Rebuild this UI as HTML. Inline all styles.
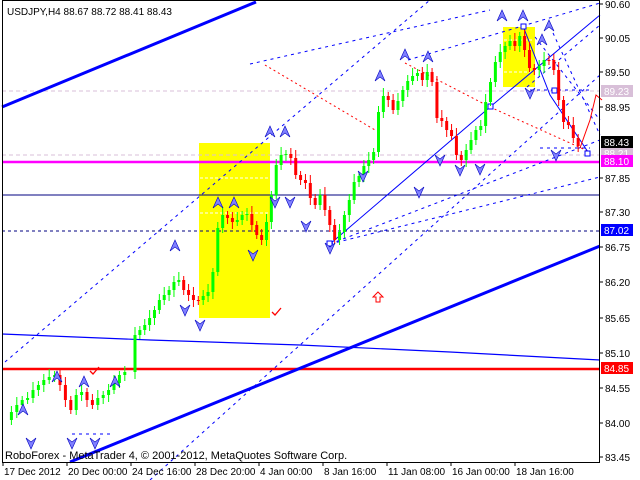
<!DOCTYPE html>
<html><head><meta charset="utf-8"><style>
html,body{margin:0;padding:0;background:#fff;}
body{width:640px;height:480px;overflow:hidden;font-family:"Liberation Sans",sans-serif;}
svg{display:block}
text{font-family:"Liberation Sans",sans-serif;font-size:10px;}
</style></head><body>
<svg id="s" width="640" height="480" viewBox="0 0 640 480" xmlns="http://www.w3.org/2000/svg">
<rect width="640" height="480" fill="#fff"/>
<rect x="199" y="143" width="71" height="175" fill="#ffff00"/>
<rect x="503" y="27" width="32" height="60" fill="#ffff00"/>
<g stroke="#fff" stroke-dasharray="3,2" stroke-width="1">
<line x1="200" y1="178" x2="270" y2="178"/><line x1="200" y1="213" x2="270" y2="213"/>
<line x1="504" y1="40" x2="534" y2="40"/><line x1="504" y1="72" x2="534" y2="72"/>
</g>
<line x1="2" y1="91" x2="600" y2="91" stroke="#d8bfd8" stroke-dasharray="4,3"/>
<line x1="2" y1="155" x2="600" y2="155" stroke="#d8bfd8" stroke-dasharray="4,3"/>
<line x1="2" y1="162" x2="600" y2="162" stroke="#ff00ff" stroke-width="2.5"/>
<line x1="2" y1="195" x2="600" y2="195" stroke="#000080" stroke-width="1"/>
<line x1="2" y1="231" x2="600" y2="231" stroke="#000080" stroke-dasharray="3,3"/>
<line x1="2" y1="369" x2="600" y2="369" stroke="#ff0000" stroke-width="2.5"/>
<line x1="2" y1="107" x2="256" y2="2" stroke="#0000ff" stroke-width="3"/>
<line x1="70" y1="462" x2="600" y2="246" stroke="#0000ff" stroke-width="3"/>
<polyline points="2,334 150,340 300,345 450,352 600,360" fill="none" stroke="#0000ff" stroke-width="1.2"/>
<g stroke="#0000ff" stroke-width="1" stroke-dasharray="3,4" fill="none">
<line x1="5" y1="362" x2="430" y2="0"/>
<line x1="150" y1="480" x2="600" y2="75"/>
<line x1="330" y1="244" x2="600" y2="140"/>
<line x1="330" y1="244" x2="600" y2="177"/>
<line x1="408" y1="60" x2="600" y2="3"/>
<line x1="250" y1="64" x2="490" y2="10"/>
<line x1="553" y1="33" x2="600" y2="135"/>
<line x1="535" y1="37" x2="600" y2="120"/>
<line x1="527" y1="87" x2="600" y2="25"/>
<line x1="540" y1="148" x2="590" y2="148"/>
<line x1="530" y1="90" x2="590" y2="90"/>
<line x1="72" y1="434" x2="110" y2="434"/>
</g>
<g stroke="#ff0000" stroke-width="1" stroke-dasharray="2,3" fill="none">
<line x1="405" y1="63" x2="490" y2="107"/>
<line x1="490" y1="107" x2="590" y2="152"/>
<line x1="265" y1="65" x2="375" y2="130"/>
</g>
<polyline points="330,244 490,107 600,15" fill="none" stroke="#0000ff" stroke-width="1"/>
<polyline points="523,26 550,95 590,155" fill="none" stroke="#0000ff" stroke-width="1"/>
<polyline points="580,148 590,120 596,95 602,100" fill="none" stroke="#ff0000" stroke-width="1"/>
<g fill="#fff" stroke="#0000ff">
<rect x="327" y="241" width="5" height="5"/><rect x="488" y="104" width="5" height="5"/>
<rect x="521" y="24" width="5" height="5"/><rect x="552" y="88" width="5" height="5"/><rect x="585" y="151" width="5" height="5"/>
</g>
<g id="candles"></g>
<g id="fr" fill="#8080ff" stroke="#0000c0" stroke-width="0.6"></g>
<path d="M272,312 l3,3 l6,-7" stroke="#ff0000" fill="none" stroke-width="1.3"/>
<path d="M90,371 l3,3 l6,-7" stroke="#ff0000" fill="none" stroke-width="1.3"/>
<path d="M378,292 l5,5 h-3 v5 h-4 v-5 h-3 z" fill="#fff" stroke="#ff0000"/>
<rect x="2.5" y="0.5" width="597" height="462" fill="none" stroke="#000"/>
<text x="7" y="15">USDJPY,H4  88.67 88.72 88.41 88.43</text>
<text x="5" y="459" style="font-size:11px">RoboForex - MetaTrader 4, © 2001-2012, MetaQuotes Software Corp.</text>
<g id="axis"></g>
</svg>
<script>
var NS="http://www.w3.org/2000/svg";
function el(p,t,a,txt){var e=document.createElementNS(NS,t);for(var k in a)e.setAttribute(k,a[k]);if(txt)e.textContent=txt;p.appendChild(e);return e;}
var ys=[420,412,405,400,398,390,385,380,377,375,385,400,410,395,392,400,405,398,395,390,383,375,372,
335,330,325,318,310,300,295,290,282,280,290,295,300,300,296,292,272,228,215,218,222,220,215,214,225,235,240,222,195,165,155,154,158,175,180,183,198,205,195,210,225,240,232,215,200,182,176,166,160,152,112,96,100,110,101,90,81,76,73,80,72,82,118,121,130,136,155,160,150,140,130,126,102,82,62,52,46,41,46,36,50,68,70,66,60,60,70,100,122,125,138,146];
var c=document.getElementById("candles");
var xs=[];for(var i=0;i<23;i++)xs.push(6+i*5.4);
for(var i=23;i<ys.length;i++)xs.push(135+(i-23)*4.87);
for(var i=1;i<ys.length;i++){var o=ys[i-1],cl=ys[i],x=xs[i];var up=cl<o;var col=up?"#00ff00":"#ff0000";
var t=Math.min(o,cl),b=Math.max(o,cl);if(b-t<1)b=t+1;
el(c,"line",{x1:x,y1:t-4-(i%3)*2,x2:x,y2:b+4+(i%4),stroke:col,"stroke-width":1});
el(c,"rect",{x:x-1.5,y:t,width:3,height:b-t,fill:col});}
var fr=document.getElementById("fr");
var ups=[[23,410],[57,377],[84,382],[115,382],[175,246],[218,203],[234,203],[270,132],[285,132],[380,76],[405,55],[428,57],[502,16],[523,16],[549,26],[542,40]];
var dns=[[31,443],[72,443],[95,443],[185,310],[200,325],[253,255],[275,202],[290,202],[306,226],[330,248],[363,176],[419,192],[440,160],[460,170],[480,169],[530,93],[556,155]];
ups.forEach(function(p){el(fr,"path",{d:"M"+(p[0]-5)+","+(p[1]+5)+" L"+p[0]+","+(p[1]-6)+" L"+(p[0]+5)+","+(p[1]+5)+" L"+p[0]+","+(p[1]+1)+"Z"});});
dns.forEach(function(p){el(fr,"path",{d:"M"+(p[0]-5)+","+(p[1]-5)+" L"+p[0]+","+(p[1]+6)+" L"+(p[0]+5)+","+(p[1]-5)+" L"+p[0]+","+(p[1]-1)+"Z"});});
var ax=document.getElementById("axis");
var lv=[["90.60",4],["90.05",38],["89.50",72],["88.95",107],["87.85",178],["87.30",212],["86.75",247],["86.20",282],["85.65",318],["85.10",353],["84.55",388],["84.00",423],["83.45",457]];
lv.forEach(function(l){el(ax,"line",{x1:600,y1:l[1],x2:603,y2:l[1],stroke:"#000"});el(ax,"text",{x:605,y:l[1]+4,fill:"#000"},l[0]);});
var bx=[["89.23",91,"#d8bfd8"],["88.21",153,"#d8bfd8"],["88.43",142,"#000"],["88.10",161,"#ff00ff"],["87.02",230,"#0000ff"],["84.85",368,"#ff0000"]];
bx.forEach(function(b){el(ax,"rect",{x:601,y:b[1]-6,width:32,height:12,fill:b[2]});el(ax,"text",{x:604,y:b[1]+4,fill:"#fff"},b[0]);});
var tl=["17 Dec 2012","20 Dec 00:00","24 Dec 16:00","28 Dec 20:00","4 Jan 00:00","8 Jan 16:00","11 Jan 08:00","16 Jan 00:00","18 Jan 16:00"];
tl.forEach(function(t,i){var x=3+i*64;el(ax,"line",{x1:x,y1:462,x2:x,y2:466,stroke:"#000"});el(ax,"text",{x:x+1,y:475,fill:"#000"},t);});
</script>
</body></html>
